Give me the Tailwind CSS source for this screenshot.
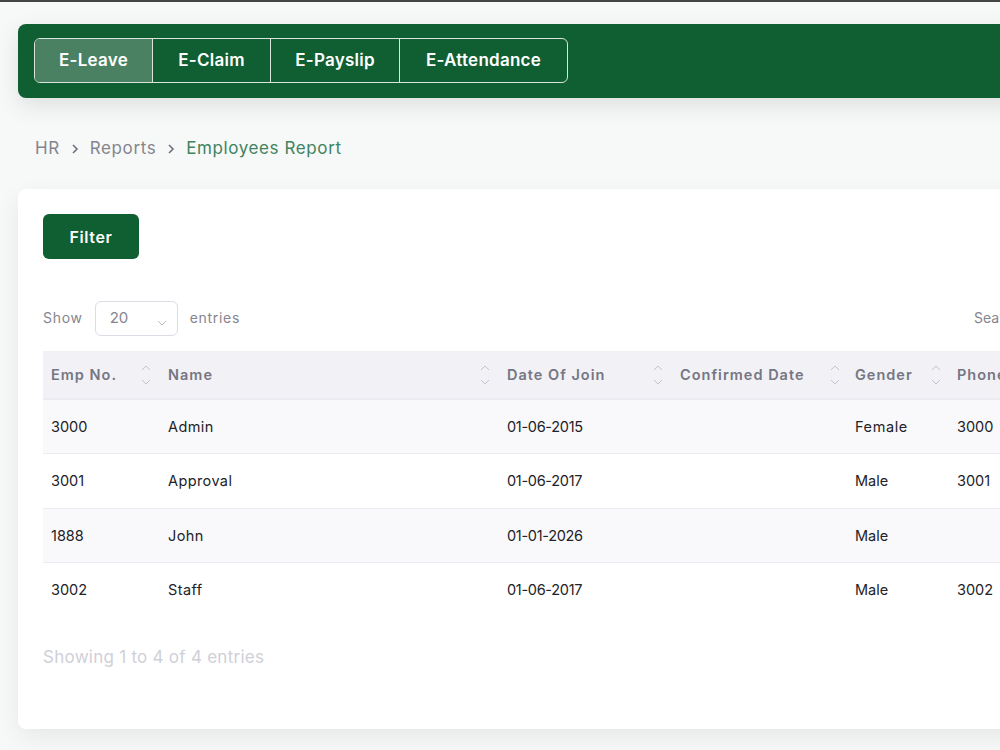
<!DOCTYPE html>
<html lang="en">
<head>
<meta charset="UTF-8">
<meta name="viewport" content="width=device-width, initial-scale=1.0">
<title>Employees Report</title>
<script src="https://cdn.jsdelivr.net/npm/@tailwindcss/browser@4"></script>
</head>
<body class="bg-[#f7f8f8] font-['Inter',sans-serif] overflow-hidden">
<div class="w-[1000px] h-[750px] overflow-hidden border-t-2 border-[#444444] pt-[22px] pl-[18px]">
  <!-- top banner -->
  <div class="w-[1200px] h-[74px] bg-[#0f5f32] rounded-lg shadow-[0_8px_24px_rgba(0,0,0,0.1)] pl-4 pt-[14px]">
    <div class="flex w-[534px] h-[45px] border border-[#d8e4dc] rounded-md overflow-hidden text-white text-[17px] font-semibold tracking-[0.25px]">
      <a class="w-[118px] flex items-center justify-center bg-[#4a8162] border-r border-[#d8e4dc]">E-Leave</a>
      <a class="w-[118px] flex items-center justify-center border-r border-[#d8e4dc]">E-Claim</a>
      <a class="w-[129px] flex items-center justify-center border-r border-[#d8e4dc]">E-Payslip</a>
      <a class="flex-1 flex items-center justify-center">E-Attendance</a>
    </div>
  </div>

  <!-- breadcrumb -->
  <div class="flex items-center h-[24px] mt-[39px] ml-[17px] text-[17px] tracking-[0.6px] text-[#85858f]">
    <span>HR</span>
    <svg class="mx-[8px] w-[14px] h-[14px]" viewBox="0 0 14 14" fill="none" stroke="#6b6b75" stroke-width="1.5"><path d="M5 3l4 4-4 4"/></svg>
    <span>Reports</span>
    <svg class="mx-[8px] w-[14px] h-[14px]" viewBox="0 0 14 14" fill="none" stroke="#6b6b75" stroke-width="1.5"><path d="M5 3l4 4-4 4"/></svg>
    <span class="text-[#3f8360]">Employees Report</span>
  </div>

  <!-- card -->
  <div class="w-[1200px] h-[540px] mt-[28px] bg-white rounded-lg shadow-[0_8px_24px_rgba(0,0,0,0.07)] pt-[25px] pl-[25px]">
    <button class="w-[96px] h-[45px] bg-[#0f5f32] rounded-md text-white text-[16px] font-semibold tracking-[0.6px]">Filter</button>

    <div class="flex items-center justify-between w-[1100px] h-[35px] mt-[42px] text-[14px] text-[#85858f]">
      <div class="flex items-center">
        <span class="tracking-[0.7px] -mt-[3px]">Show</span>
        <div class="relative w-[83px] h-[35px] ml-[12px] mr-[12px] border border-[#dcdce4] rounded-md flex items-center pl-[14px] text-[15px]">
          20
          <svg class="absolute right-[9px] top-[17px] w-[12px] h-[10px]" viewBox="0 0 12 10" fill="none" stroke="#b9b9c4" stroke-width="1"><path d="M2 2l4 4 4-4"/></svg>
        </div>
        <span class="tracking-[0.7px] -mt-[3px]">entries</span>
      </div>
      <div class="w-[169px] -mt-[3px]">Search:</div>
    </div>

    <table class="table-fixed w-[1100px] mt-[15px] border-collapse text-[14.5px] text-[#222228]">
      <colgroup>
        <col class="w-[117px]"><col class="w-[339px]"><col class="w-[173px]"><col class="w-[175px]"><col class="w-[102px]"><col>
      </colgroup>
      <thead>
        <tr class="h-[48px] bg-[#f1f1f6] border-b-2 border-[#ebebf2] text-left text-[#767683] tracking-[1px]">
          <th class="pl-2 pr-2 font-semibold"><div class="flex items-center justify-between">Emp No.<svg class="w-[12px] h-[24px]" viewBox="0 0 12 24" fill="none" stroke="#c4c4ce"><path d="M2 7l4-4 4 4M2 17l4 4 4-4"/></svg></div></th>
          <th class="pl-2 pr-2 font-semibold"><div class="flex items-center justify-between">Name<svg class="w-[12px] h-[24px]" viewBox="0 0 12 24" fill="none" stroke="#c4c4ce"><path d="M2 7l4-4 4 4M2 17l4 4 4-4"/></svg></div></th>
          <th class="pl-2 pr-2 font-semibold"><div class="flex items-center justify-between">Date Of Join<svg class="w-[12px] h-[24px]" viewBox="0 0 12 24" fill="none" stroke="#c4c4ce"><path d="M2 7l4-4 4 4M2 17l4 4 4-4"/></svg></div></th>
          <th class="pl-2 pr-[6px] font-semibold"><div class="flex items-center justify-between">Confirmed Date<svg class="w-[12px] h-[24px]" viewBox="0 0 12 24" fill="none" stroke="#c4c4ce"><path d="M2 7l4-4 4 4M2 17l4 4 4-4"/></svg></div></th>
          <th class="pl-2 pr-[7px] font-semibold"><div class="flex items-center justify-between">Gender<svg class="w-[12px] h-[24px]" viewBox="0 0 12 24" fill="none" stroke="#c4c4ce"><path d="M2 7l4-4 4 4M2 17l4 4 4-4"/></svg></div></th>
          <th class="px-2 font-semibold">Phone</th>
        </tr>
      </thead>
      <tbody>
        <tr class="h-[54px] bg-[#f9f9fb] border-b border-[#ebebf2]"><td class="px-2 pt-[2px]">3000</td><td class="px-2 pt-[2px] tracking-[0.4px]">Admin</td><td class="px-2 pt-[2px] tracking-[-0.3px]">01-06-2015</td><td class="px-2"></td><td class="px-2 pt-[2px] tracking-[0.6px]">Female</td><td class="px-2 pt-[2px]">3000</td></tr>
        <tr class="h-[55px] border-b border-[#ebebf2]"><td class="px-2">3001</td><td class="px-2 tracking-[0.4px]">Approval</td><td class="px-2 tracking-[-0.3px]">01-06-2017</td><td class="px-2"></td><td class="px-2">Male</td><td class="px-2">3001</td></tr>
        <tr class="h-[54px] bg-[#f9f9fb] border-b border-[#ebebf2]"><td class="px-2 pt-[2px]">1888</td><td class="px-2 pt-[2px] tracking-[0.4px]">John</td><td class="px-2 pt-[2px] tracking-[-0.3px]">01-01-2026</td><td class="px-2"></td><td class="px-2 pt-[2px]">Male</td><td class="px-2"></td></tr>
        <tr class="h-[55px]"><td class="px-2">3002</td><td class="px-2 tracking-[0.4px]">Staff</td><td class="px-2 tracking-[-0.3px]">01-06-2017</td><td class="px-2"></td><td class="px-2">Male</td><td class="px-2">3002</td></tr>
      </tbody>
    </table>

    <p class="mt-[28px] text-[17px] tracking-[0.26px] text-[#cfcfd8]">Showing 1 to 4 of 4 entries</p>
  </div>
</div>
</body>
</html>
